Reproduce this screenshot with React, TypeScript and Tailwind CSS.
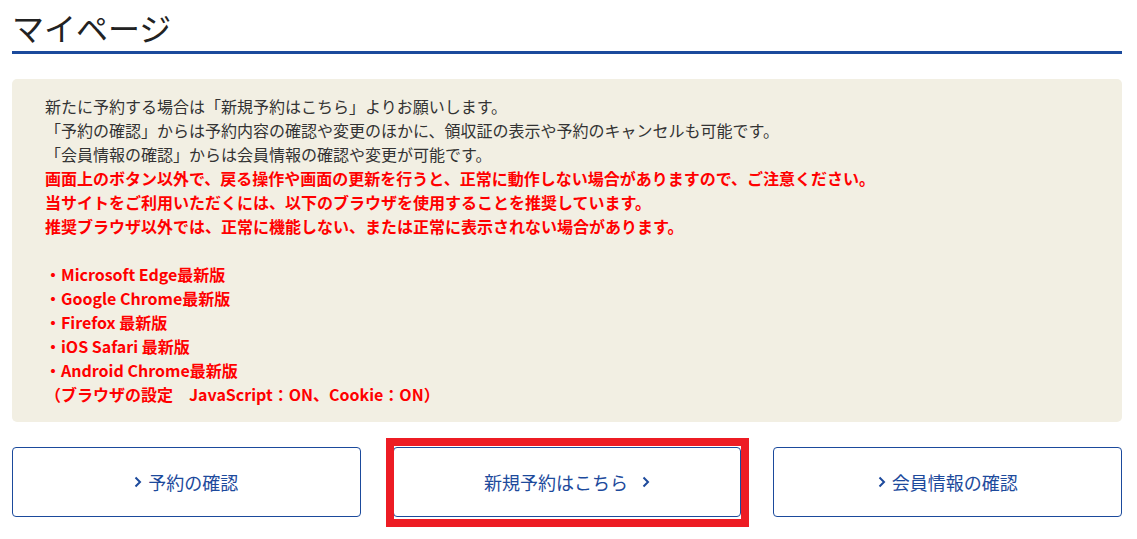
import React from 'react';

const jp = "font-['Noto_Sans_CJK_JP','Noto_Sans',sans-serif]";

function Chevron() {
  return (
    <svg width="8" height="12" viewBox="0 0 8 12" className="inline-block shrink-0">
      <path d="M1.5 1.5 L6 6 L1.5 10.5" fill="none" stroke="#1d4a9c" strokeWidth="2" />
    </svg>
  );
}

const browsers = [
  '・Microsoft Edge最新版',
  '・Google Chrome最新版',
  '・Firefox 最新版',
  '・iOS Safari 最新版',
  '・Android Chrome最新版',
];

export default function App() {
  return (
    <main className={`min-h-screen bg-white ${jp}`}>
      <div className="ml-[12px] w-[1110px]">
        <h1 className="mt-[3px] border-b-[3px] border-[#1b4a9c] text-[32px] font-normal leading-[48px] text-[#222]">
          マイページ
        </h1>

        <div className="mt-[25px] rounded-[5px] bg-[#f2efe3] pt-[15px] pb-[16px] pl-[33px] text-[16px] leading-6">
          <p className="text-[#333]">新たに予約する場合は「新規予約はこちら」よりお願いします。</p>
          <p className="text-[#333]">「予約の確認」からは予約内容の確認や変更のほかに、領収証の表示や予約のキャンセルも可能です。</p>
          <p className="text-[#333]">「会員情報の確認」からは会員情報の確認や変更が可能です。</p>
          <div className="font-bold text-[#ff0000]">
            <p>画面上のボタン以外で、戻る操作や画面の更新を行うと、正常に動作しない場合がありますので、ご注意ください。</p>
            <p>当サイトをご利用いただくには、以下のブラウザを使用することを推奨しています。</p>
            <p>推奨ブラウザ以外では、正常に機能しない、または正常に表示されない場合があります。</p>
            <p className="h-6" />
            {browsers.map((b) => (
              <p key={b}>{b}</p>
            ))}
            <p>（ブラウザの設定　JavaScript：ON、Cookie：ON）</p>
          </div>
        </div>

        <div className="mt-[25px] grid grid-cols-3 gap-8">
          <button className="flex h-[70px] items-center justify-center gap-[6px] rounded-[4px] border border-[#1b4a9c] bg-white text-[18px] text-[#1d4a9c]">
            <Chevron />
            <span>予約の確認</span>
          </button>
          <div className="relative">
            <button className="flex h-[70px] w-full items-center justify-center gap-[14px] rounded-[4px] border border-[#1b4a9c] bg-white text-[18px] text-[#1d4a9c]">
              <span>新規予約はこちら</span>
              <Chevron />
            </button>
            <span className="pointer-events-none absolute -top-[9px] -bottom-[10px] -left-[7px] -right-[8px] border-[8px] border-[#ed1c24]" />
          </div>
          <button className="flex h-[70px] items-center justify-center gap-[6px] rounded-[4px] border border-[#1b4a9c] bg-white text-[18px] text-[#1d4a9c]">
            <Chevron />
            <span>会員情報の確認</span>
          </button>
        </div>
      </div>
    </main>
  );
}
